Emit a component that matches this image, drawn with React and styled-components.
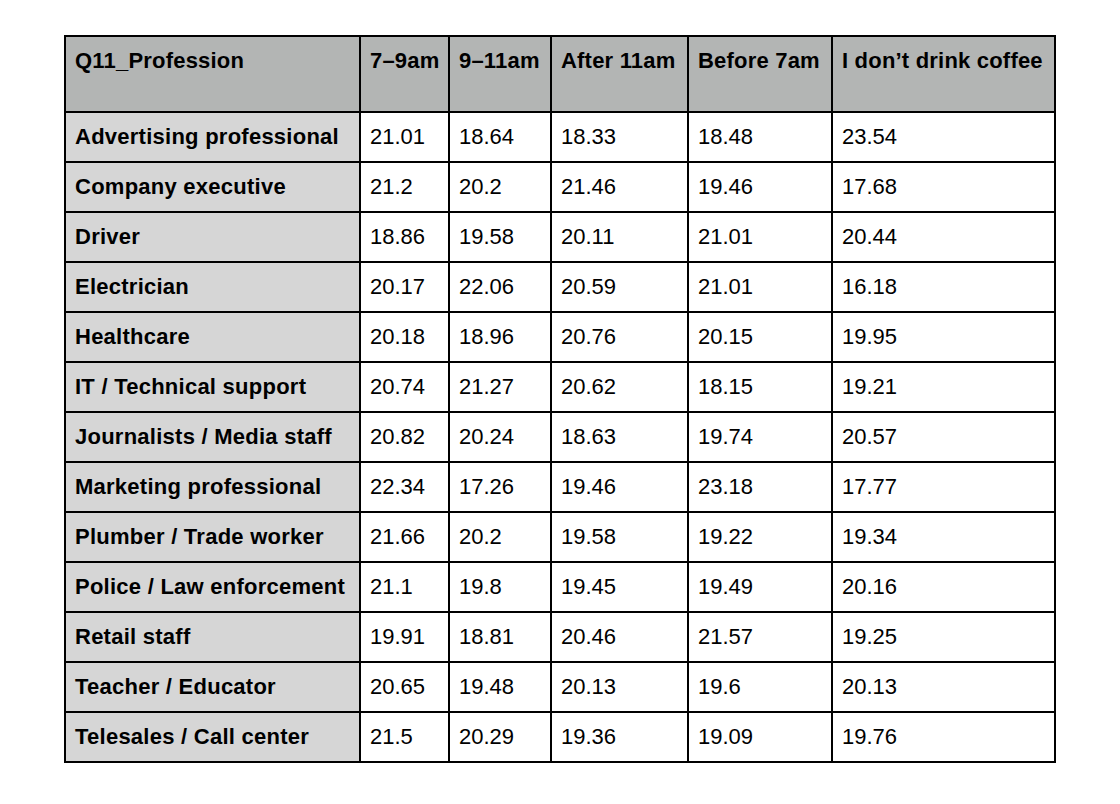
import React from "react";
import styled, { createGlobalStyle } from "styled-components";

const Global = createGlobalStyle`
  html, body { margin: 0; padding: 0; background: #ffffff; }
  body { font-family: "Liberation Sans", Arial, sans-serif; color: #000; }
`;

const Page = styled.div`
  padding: 35px 0 0 64px;
`;

const Table = styled.table`
  border-collapse: collapse;
  table-layout: fixed;
  width: 990px;
  font-family: "Liberation Sans", Arial, sans-serif;
  font-size: 22px;
  border: 2px solid #000;
`;

const Col = styled.col`
  width: ${(p) => p.$w}px;
`;

const HeadCell = styled.th`
  background: #b3b5b4;
  border: 2px solid #000;
  height: 76px;
  box-sizing: border-box;
  padding: 11px 9px 0 9px;
  text-align: left;
  vertical-align: top;
  font-weight: 700;
  letter-spacing: 0.2px;
  white-space: nowrap;
`;

const RowHead = styled.th`
  background: #d6d6d6;
  border: 2px solid #000;
  height: 50px;
  box-sizing: border-box;
  padding: 0 9px;
  text-align: left;
  vertical-align: middle;
  font-weight: 700;
  letter-spacing: 0.25px;
  white-space: nowrap;
`;

const Cell = styled.td`
  background: #ffffff;
  border: 2px solid #000;
  height: 50px;
  box-sizing: border-box;
  padding: 0 9px;
  text-align: left;
  vertical-align: middle;
  font-weight: 400;
  white-space: nowrap;
`;

const widths = [295, 89, 102, 137, 144, 223];
const headers = ["Q11_Profession", "7–9am", "9–11am", "After 11am", "Before 7am", "I don’t drink coffee"];

const rows = [
  ["Advertising professional", "21.01", "18.64", "18.33", "18.48", "23.54"],
  ["Company executive", "21.2", "20.2", "21.46", "19.46", "17.68"],
  ["Driver", "18.86", "19.58", "20.11", "21.01", "20.44"],
  ["Electrician", "20.17", "22.06", "20.59", "21.01", "16.18"],
  ["Healthcare", "20.18", "18.96", "20.76", "20.15", "19.95"],
  ["IT / Technical support", "20.74", "21.27", "20.62", "18.15", "19.21"],
  ["Journalists / Media staff", "20.82", "20.24", "18.63", "19.74", "20.57"],
  ["Marketing professional", "22.34", "17.26", "19.46", "23.18", "17.77"],
  ["Plumber / Trade worker", "21.66", "20.2", "19.58", "19.22", "19.34"],
  ["Police / Law enforcement", "21.1", "19.8", "19.45", "19.49", "20.16"],
  ["Retail staff", "19.91", "18.81", "20.46", "21.57", "19.25"],
  ["Teacher / Educator", "20.65", "19.48", "20.13", "19.6", "20.13"],
  ["Telesales / Call center", "21.5", "20.29", "19.36", "19.09", "19.76"],
];

export default function App() {
  return (
    <>
      <Global />
      <Page>
        <Table>
          <colgroup>
            {widths.map((w, i) => (
              <Col key={i} $w={w} />
            ))}
          </colgroup>
          <thead>
            <tr>
              {headers.map((h) => (
                <HeadCell key={h}>{h}</HeadCell>
              ))}
            </tr>
          </thead>
          <tbody>
            {rows.map((r) => (
              <tr key={r[0]}>
                <RowHead>{r[0]}</RowHead>
                {r.slice(1).map((v, i) => (
                  <Cell key={i}>{v}</Cell>
                ))}
              </tr>
            ))}
          </tbody>
        </Table>
      </Page>
    </>
  );
}
